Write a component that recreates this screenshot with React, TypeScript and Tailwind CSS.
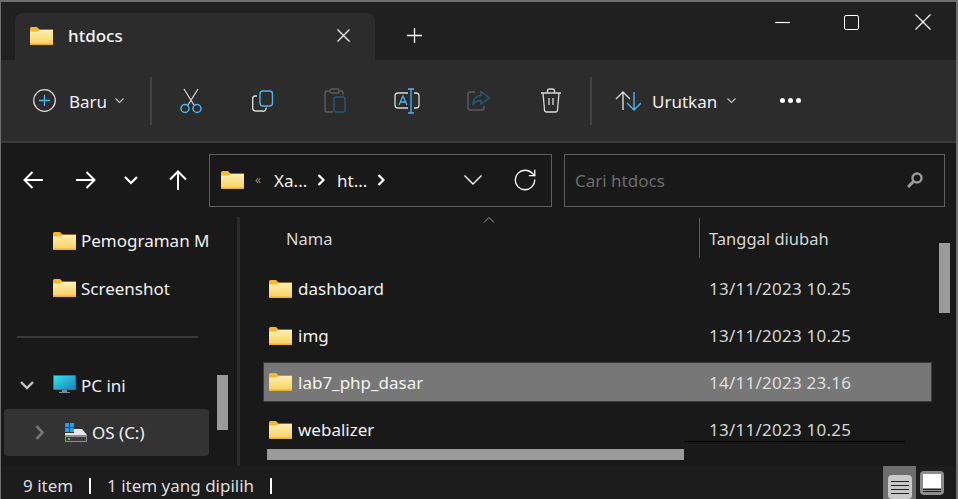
import { RotateCw } from "lucide-react";

function Folder() {
  return (
    <svg width="23" height="18" viewBox="0 0 23 18" className="shrink-0">
      <path d="M0 1.5 A1.5 1.5 0 0 1 1.500 0 H7 L9.500 2.500 H23 V6 H0 Z" fill="#f8b72c" />
      <path d="M0 4.500 H7.500 L9.500 3 H23 V16.500 A1.500 1.500 0 0 1 21.500 18 H1.500 A1.500 1.500 0 0 1 0 16.500 Z" fill="url(#folderFill)" />
      <path d="M0 16.500 H23 V18 H0 Z" fill="#eeb02f" />
      <defs>
        <linearGradient id="folderFill" x1="0" y1="0" x2="0" y2="1">
          <stop offset="0" stopColor="#ffefb0" />
          <stop offset="1" stopColor="#fccf5c" />
        </linearGradient>
      </defs>
    </svg>
  );
}

// small line drawing helper, everything in the chrome is stroked white-ish
function Line({ w, h, d, color = "#ffffff", sw = 1.3, className }: { w: number; h: number; d: string; color?: string; sw?: number; className?: string }) {
  return (
    <svg width={w} height={h} viewBox={`0 0 ${w} ${h}`} fill="none" stroke={color} strokeWidth={sw} className={className ? `shrink-0 ${className}` : "shrink-0"}>
      <path d={d} />
    </svg>
  );
}

function Cut() {
  return (
    <svg width="22" height="26" viewBox="0 0 22 26" fill="none" stroke="#d8d8d8" strokeWidth="1.2">
      <path d="M4 1 L14 17 M18 1 L8 17" />
      <circle cx="5" cy="20.500" r="4" stroke="#4cb4ee" strokeWidth="1.500" />
      <circle cx="17" cy="20.500" r="4" stroke="#4cb4ee" strokeWidth="1.500" />
    </svg>
  );
}

function Copy() {
  return (
    <svg width="22" height="22" viewBox="0 0 22 22" fill="none" strokeWidth="1.400">
      <path d="M5 6 H3 A2.500 2.500 0 0 0 .700 8.500 V18 A3 3 0 0 0 3.500 21 H10 A3 3 0 0 0 14 17.500" stroke="#d8d8d8" />
      <rect x="8" y="1" width="12.500" height="15" rx="3" stroke="#4cb4ee" />
    </svg>
  );
}

function Paste() {
  return (
    <svg width="22" height="25" viewBox="0 0 22 25" fill="none" strokeWidth="1.400">
      <path d="M6 3 H3 A2 2 0 0 0 1 5 V22 A2 2 0 0 0 3 24 H9 M15 3 H17 A2 2 0 0 1 19 5 V7" stroke="#5c5c5c" />
      <rect x="6" y="1" width="9" height="4" rx="1.500" stroke="#5c5c5c" />
      <rect x="10" y="9" width="11" height="15" rx="2" stroke="#275a78" />
    </svg>
  );
}

function Rename() {
  return (
    <svg width="26" height="26" viewBox="0 0 26 26" fill="none" strokeWidth="1.300">
      <path d="M14 5 H4 A3 3 0 0 0 1 8 V17 A3 3 0 0 0 4 20 H14 M20 5 H22 A3 3 0 0 1 25 8 V17 A3 3 0 0 1 22 20 H20" stroke="#d8d8d8" />
      <path d="M14 1 H20 M17 1 V25 M14 25 H20 M5 17 L9 8 L13 17 M6.500 14 H11.500" stroke="#4cb4ee" />
    </svg>
  );
}

function Share() {
  return (
    <svg width="24" height="22" viewBox="0 0 24 22" fill="none" strokeWidth="1.400">
      <path d="M8 2 H3 A2 2 0 0 0 1 4 V18 A2 2 0 0 0 3 20 H15 A2 2 0 0 0 17 18 V16" stroke="#5c5c5c" />
      <path d="M14 1.500 L22.500 8 L14 14 V10.500 C10 10.500 7.500 12 6 15 C6 9.500 9 6 14 5.500 Z" stroke="#275a78" />
    </svg>
  );
}

function Trash() {
  return (
    <svg width="22" height="25" viewBox="0 0 22 25" fill="none" stroke="#d8d8d8" strokeWidth="1.300">
      <path d="M1 5 H21 M7.500 5 V3 A2 2 0 0 1 9.500 1 H12.500 A2 2 0 0 1 14.500 3 V5" />
      <path d="M3 5 L4.500 22 A2.200 2.200 0 0 0 6.700 24 H15.300 A2.200 2.200 0 0 0 17.500 22 L19 5" />
      <path d="M9 10 V17 M13 10 V17" />
    </svg>
  );
}

function SortIcon() {
  return (
    <svg width="26" height="20" viewBox="0 0 26 20" fill="none" strokeWidth="1.400">
      <path d="M1 8 L8 1 L15 8 M8 1 V19" stroke="#d8d8d8" />
      <path d="M12 12 L19 19 L26 12 M19 1 V19" stroke="#4cb4ee" />
    </svg>
  );
}

function Monitor() {
  return (
    <svg width="23" height="20" viewBox="0 0 23 20" className="shrink-0">
      <rect x="0" y="0" width="23" height="15" rx="1" fill="#55696f" />
      <rect x="1" y="1" width="21" height="13" fill="url(#screenFill)" />
      <path d="M9 15 H14 V17 H17 V18 H6 V17 H9 Z" fill="#7d8b90" />
      <defs>
        <linearGradient id="screenFill" x1="0" y1="0" x2="1" y2="1">
          <stop offset="0" stopColor="#35dfe6" />
          <stop offset="1" stopColor="#1685c4" />
        </linearGradient>
      </defs>
    </svg>
  );
}

function Drive() {
  return (
    <svg width="22" height="21" viewBox="0 0 22 21" className="shrink-0">
      <path d="M0 1 H4 V5 H0 Z M5 1 H9 V5 H5 Z M0 6 H4 V10 H0 Z M5 6 H9 V10 H5 Z" fill="#2a9de8" />
      <path d="M9 7 H17 L22 13 H0 L0 11 H9 Z" fill="#e6e6e6" />
      <rect x="0" y="13" width="22" height="7" fill="#8d8d8d" />
      <rect x="1" y="15" width="20" height="4" fill="#3d3d3d" />
      <rect x="3" y="16" width="2" height="2" fill="#45d645" />
    </svg>
  );
}

function FileRow({ name, date, selected }: { name: string; date: string; selected?: boolean }) {
  return (
    <div
      className={
        selected
          ? "flex items-center h-[40px] bg-[#777777] border border-[#3a3a3a] mt-[3px] mb-[4px] ml-[23px] w-[669px] pl-[5px]"
          : "flex items-center h-[47px] ml-[23px] w-[669px] pl-[6px]"
      }
    >
      <Folder />
      <span className={selected ? "ml-[6px] w-[411px] text-[#f4f4f4]" : "ml-[6px] w-[411px] text-[#f0f0f0]"}>{name}</span>
      <span className={selected ? "text-[#dddddd] tracking-[0.25px]" : "text-[#d4d4d4] tracking-[0.25px]"}>{date}</span>
    </div>
  );
}

export default function App() {
  return (
    <div
      className="w-[958px] h-[499px] overflow-hidden flex flex-col bg-[#191919] border-t-2 border-l border-r-2 border-[#6e6e6e] text-[#f0f0f0] text-[17px] leading-none"
      style={{ fontFamily: '"Noto Sans", sans-serif' }}
    >
      {/* title bar */}
      <div className="h-[58px] shrink-0 bg-[#202020] flex items-end pl-[14px]">
        <div className="w-[360px] h-[47px] bg-[#2c2c2c] rounded-t-lg flex items-center pl-[15px] pb-[2px]">
          <Folder />
          <span className="ml-[15px] font-medium text-[#f4f4f4]">htdocs</span>
          <Line w={13} h={13} d="M.5 .5 L12.500 12.500 M12.500 .5 L.5 12.500" sw={1.200} className="ml-[214px]" />
        </div>
        <div className="w-[78px] h-[47px] flex items-center justify-center pb-[2px]">
          <Line w={15} h={15} d="M0 7.500 H15 M7.500 0 V15" sw={1.300} />
        </div>
        <div className="flex-1 self-start flex justify-end items-center pt-[12px] pr-[25px]">
          <Line w={15} h={15} d="M0 7.500 H15" sw={1.200} className="mr-[54px]" />
          <div className="w-[15px] h-[15px] border-[1.5px] border-white rounded-[2px] mr-[56px]" />
          <Line w={16} h={16} d="M.5 .5 L15.500 15.500 M15.500 .5 L.5 15.500" sw={1.200} />
        </div>
      </div>

      {/* toolbar */}
      <div className="h-[81px] shrink-0 bg-[#2c2c2c] border-b-2 border-[#3a3a3a] box-content flex items-center pl-[32px]">
        <svg width="23" height="23" viewBox="0 0 23 23" fill="none" strokeWidth="1.300">
          <circle cx="11.500" cy="11.500" r="10.800" stroke="#d8d8d8" />
          <path d="M6 11.500 H17 M11.500 6 V17" stroke="#4cb4ee" />
        </svg>
        <span className="ml-[13px] w-[37px] pt-[2px]">Baru</span>
        <Line w={9} h={5} d="M.5 .5 L4.500 4.500 L8.500 .5" color="#bdbdbd" sw={1.200} className="ml-[9px]" />
        <div className="ml-[26px] w-[2px] h-[48px] bg-[#424242]" />
        <div className="w-[72px] ml-[3px] flex justify-center"><Cut /></div>
        <div className="w-[72px] flex justify-center"><Copy /></div>
        <div className="w-[72px] flex justify-center"><Paste /></div>
        <div className="w-[72px] flex justify-center"><Rename /></div>
        <div className="w-[72px] flex justify-center"><Share /></div>
        <div className="w-[72px] flex justify-center"><Trash /></div>
        <div className="ml-[3px] w-[2px] h-[48px] bg-[#424242]" />
        <div className="ml-[23px]"><SortIcon /></div>
        <span className="ml-[11px] w-[66px] pt-[2px]">Urutkan</span>
        <Line w={9} h={5} d="M.5 .5 L4.500 4.500 L8.500 .5" color="#bdbdbd" sw={1.200} className="ml-[9px]" />
        <div className="ml-[44px] flex gap-[3px]">
          <div className="w-[5px] h-[5px] rounded-full bg-white" />
          <div className="w-[5px] h-[5px] rounded-full bg-white" />
          <div className="w-[5px] h-[5px] rounded-full bg-white" />
        </div>
      </div>

      {/* address row */}
      <div className="h-[74px] shrink-0 flex items-center">
        <Line w={20} h={18} d="M20 9 H1.500 M9.500 1 L1.500 9 L9.500 17" sw={2} className="ml-[22px]" />
        <Line w={20} h={18} d="M0 9 H18.500 M10.500 1 L18.500 9 L10.500 17" sw={2} className="ml-[33px]" />
        <Line w={14} h={9} d="M1 1 L7 7 L13 1" sw={2.200} className="ml-[28px]" />
        <Line w={20} h={20} d="M10 20 V1.500 M2 9.500 L10 1.500 L18 9.500" sw={2} className="ml-[30px]" />
        <div className="ml-[21px] w-[343px] h-[53px] border border-[#5e5e5e] flex items-center pl-[11px]">
          <Folder />
          <span className="ml-[11px] text-[12px] text-[#8a8a8a]">«</span>
          <span className="ml-[13px] w-[33px]">Xa...</span>
          <Line w={8} h={12} d="M1.500 1 L6.500 6 L1.500 11" sw={2.200} className="ml-[10px]" />
          <span className="ml-[12px] w-[30px]">ht...</span>
          <Line w={8} h={12} d="M1.500 1 L6.500 6 L1.500 11" sw={2.200} className="ml-[10px]" />
          <Line w={18} h={10} d="M.5 .5 L9 9 L17.500 .5" sw={1.400} className="ml-[79px]" />
          <RotateCw size={26} strokeWidth={1.200} className="ml-[30px] text-white" />
        </div>
        <div className="ml-[12px] w-[381px] h-[53px] border border-[#5e5e5e] flex items-center pl-[10px] pr-[20px] justify-between">
          <span className="text-[#6c6c6c]">Cari htdocs</span>
          <svg width="18" height="18" viewBox="0 0 18 18" fill="none" stroke="#9a9a9a">
            <circle cx="11" cy="7" r="4.500" strokeWidth="2.400" />
            <path d="M7.500 10.500 L2 16" strokeWidth="3" />
          </svg>
        </div>
      </div>

      {/* body */}
      <div className="relative flex-1 flex min-h-0">
        {/* nav pane */}
        <div className="w-[236px] shrink-0 overflow-hidden">
          <div className="w-[208px] overflow-hidden">
            <div className="h-[47px] flex items-center pl-[52px] whitespace-nowrap">
              <Folder />
              <span className="ml-[5px]">Pemograman M</span>
            </div>
            <div className="h-[48px] flex items-center pl-[52px]">
              <Folder />
              <span className="ml-[5px]">Screenshot</span>
            </div>
            <div className="mt-[24px] ml-[16px] w-[181px] h-[2px] bg-[#3a3a3a]" />
            <div className="mt-[23px] h-[48px] flex items-center pl-[19px]">
              <Line w={14} h={9} d="M1 1 L7 7 L13 1" color="#c4c4c4" sw={2.400} />
              <div className="ml-[19px]"><Monitor /></div>
              <span className="ml-[5px]">PC ini</span>
            </div>
            <div className="ml-[3px] w-[205px] h-[47px] bg-[#333333] rounded-sm flex items-center pl-[31px]">
              <Line w={9} h={15} d="M1.500 1 L7.500 7.500 L1.500 14" color="#777777" sw={2.600} />
              <div className="ml-[21px]"><Drive /></div>
              <span className="ml-[5px]">OS (C:)</span>
            </div>
          </div>
        </div>
        <div className="w-[3px] shrink-0 bg-[#2b2b2b]" />

        {/* file list */}
        <div className="flex-1 min-w-0 flex flex-col">
          <div className="h-[48px] shrink-0 flex items-start text-[#d6d6d6] text-[16.5px]">
            <span className="ml-[46px] w-[413px] h-[44px] flex items-center">Nama</span>
            <div className="w-px h-[40px] bg-[#5a5a5a] mt-[1px]" />
            <span className="ml-[9px] h-[44px] flex items-center">Tanggal diubah</span>
          </div>
          <FileRow name="dashboard" date="13/11/2023 10.25" />
          <FileRow name="img" date="13/11/2023 10.25" />
          <FileRow name="lab7_php_dasar" date="14/11/2023 23.16" selected />
          <FileRow name="webalizer" date="13/11/2023 10.25" />
        </div>

        {/* overlays */}
        <svg width="12" height="6" viewBox="0 0 12 6" fill="none" stroke="#9a9a9a" className="absolute left-[482px] top-[0px]">
          <path d="M1 5.500 L6 .5 L11 5.500" />
        </svg>
        <div className="absolute left-[216px] top-[158px] w-[11px] h-[55px] bg-[#9a9a9a]" />
        <div className="absolute left-[938px] top-[26px] w-[11px] h-[70px] bg-[#9a9a9a]" />
        <div className="absolute left-[266px] top-[232px] w-[417px] h-[11px] bg-[#9a9a9a]" />
        <div className="absolute left-[683px] top-[224px] w-[221px] h-px bg-black" />
      </div>

      {/* status bar */}
      <div className="h-[33px] shrink-0 bg-[#1c1c1c] flex items-center">
        <div className="flex items-center h-full pt-[6px]">
          <span className="ml-[22px] text-[#dcdcdc] w-[66px]">9 item</span>
          <div className="w-[2px] h-[16px] bg-white" />
          <span className="ml-[16px] w-[163px] text-[#dcdcdc] whitespace-nowrap">1 item yang dipilih</span>
          <div className="w-[2px] h-[16px] bg-white" />
        </div>
        <div className="ml-auto mr-[12px] flex items-center h-full">
          <div className="w-[33px] h-full bg-[#6e6e6e] flex items-end justify-center">
            <div className="w-[24px] h-[24px] rounded-sm bg-[#c8c8c8] flex flex-col justify-center gap-[3px] px-[3px]">
              <div className="h-px bg-[#222222]" />
              <div className="h-px bg-[#222222]" />
              <div className="h-px bg-[#222222]" />
              <div className="h-px bg-[#222222]" />
            </div>
          </div>
          <div className="ml-[4px] w-[24px] h-[24px] rounded-sm bg-[#8c8c8c] flex flex-col items-center pt-[3px]">
            <div className="w-[18px] h-[14px] bg-white" />
            <div className="mt-[1px] w-[18px] h-px bg-[#222222]" />
            <div className="mt-[1px] w-[18px] h-px bg-[#222222]" />
          </div>
        </div>
      </div>
    </div>
  );
}
